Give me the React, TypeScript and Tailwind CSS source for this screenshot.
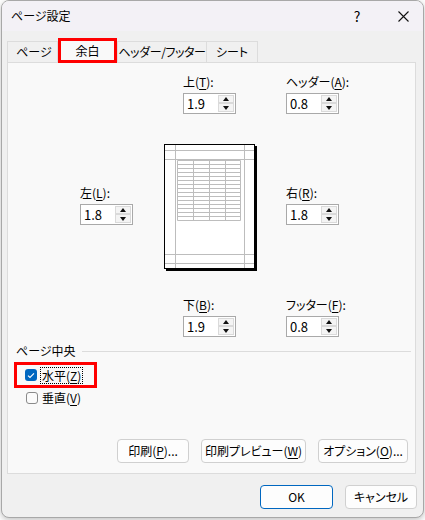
import React from 'react';

function Key({ k }: { k: string }) {
  return <span className="underline underline-offset-[2px]">{k}</span>;
}

function SpinField({ label, k, value }: { label: string; k: string; value: string }) {
  return (
    <div className="flex w-[53px] flex-col">
      <div className="mb-[3px] h-[16px] whitespace-nowrap text-[12px] leading-[16px]">
        {label}(<Key k={k} />):
      </div>
      <div className="flex h-[21px] w-[53px] border border-[#a9a9a9] bg-white">
        <div className="flex-1 pl-[3px] text-[13px] leading-[19px]">{value}</div>
        <div className="my-[1px] mr-[1px] flex w-[16px] flex-col">
          <div className="flex h-[9px] items-center justify-center border border-[#dadada] bg-[#f4f4f4]">
            <svg width="6" height="4" viewBox="0 0 6 4"><path d="M3 0L6 4H0z" fill="#111" /></svg>
          </div>
          <div className="flex h-[10px] items-center justify-center border border-[#dadada] bg-[#f4f4f4]">
            <svg width="6" height="4" viewBox="0 0 6 4"><path d="M0 0H6L3 4z" fill="#111" /></svg>
          </div>
        </div>
      </div>
    </div>
  );
}

function PagePreview() {
  const rows = Array.from({ length: 16 }, (_, i) => 16.5 + i * 4);
  const cols = [13.5, 29.5, 45.5, 61.5, 76.5];
  return (
    <svg width="93" height="127" viewBox="0 0 93 127" className="shrink-0">
      <rect x="2" y="2" width="91" height="125" fill="#000" />
      <rect x="0.5" y="0.5" width="90" height="124" fill="#fff" stroke="#000" />
      <g stroke="#bdbdbd" strokeWidth="1">
        <line x1="11.5" y1="1" x2="11.5" y2="124" />
        <line x1="80.5" y1="1" x2="80.5" y2="124" />
        <line x1="1" y1="6.5" x2="90" y2="6.5" />
        <line x1="1" y1="15.5" x2="90" y2="15.5" />
        <line x1="1" y1="110.5" x2="90" y2="110.5" />
        <line x1="1" y1="119.5" x2="90" y2="119.5" />
        {rows.map(y => (
          <line key={y} x1="13.5" y1={y} x2="76.5" y2={y} />
        ))}
        {cols.map(x => (
          <line key={x} x1={x} y1="16.5" x2={x} y2="76.5" />
        ))}
      </g>
    </svg>
  );
}

function Btn({ children, w, primary }: { children: React.ReactNode; w: string; primary?: boolean }) {
  return (
    <button
      className={`flex h-[24px] items-center justify-center rounded-[4px] bg-[#fdfdfd] text-[12px] ${w} ${primary ? 'border border-[#0067c0]' : 'border border-[#d0d0d0]'}`}
    >
      {children}
    </button>
  );
}

export default function App() {
  return (
    <div className="h-[520px] w-[425px] bg-white font-['Noto_Sans_CJK_JP','Noto_Sans',sans-serif] text-black [font-feature-settings:'palt']">
      <div className="ml-[1px] flex h-[518px] w-[423px] flex-col overflow-hidden rounded-[8px] border border-[#a8a8a8] bg-[#f0f0f0] shadow-[0_2px_6px_rgba(0,0,0,0.25)]">
        {/* title bar */}
        <div className="flex h-[30px] shrink-0 items-center bg-[#f3f1f6] pl-[9px]">
          <span className="text-[12px]">ページ設定</span>
          <div className="ml-auto mr-[6px] flex w-[40px] justify-center text-[14px]">?</div>
          <div className="flex w-[40px] justify-center">
            <svg width="11" height="11" viewBox="0 0 11 11">
              <path d="M0.5 0.5L10.5 10.5M10.5 0.5L0.5 10.5" stroke="#111" strokeWidth="1.1" />
            </svg>
          </div>
        </div>

        <div className="flex flex-col pl-[5px] pr-[7px] pt-[7px]">
          {/* tabs */}
          <div className="relative z-10 -mb-px flex h-[25px] items-end text-[12px]">
            <div className="mb-[1px] flex h-[21px] w-[51px] items-center justify-center border border-b-0 border-[#dcdcdc] bg-[#f0f0f0] pl-[3px]">ページ</div>
            <div className="flex h-[25px] w-[59px] items-center justify-center border-[3px] border-[#ff0000] bg-[#f9f9f9]">余白</div>
            <div className="mb-[1px] flex h-[21px] w-[90px] items-center justify-center border border-b-0 border-[#dcdcdc] bg-[#f0f0f0] tracking-[-0.4px]">ヘッダー/フッター</div>
            <div className="mb-[1px] flex h-[21px] w-[51px] items-center justify-center border border-b-0 border-l-0 border-[#dcdcdc] bg-[#f0f0f0]">シート</div>
          </div>

          {/* panel */}
          <div className="flex h-[412px] flex-col border border-[#dcdcdc] bg-[#f9f9f9] text-[12px]">
            <div className="flex gap-[50px] pl-[175px] pt-[11px]">
              <SpinField label="上" k="T" value="1.9" />
              <SpinField label="ヘッダー" k="A" value="0.8" />
            </div>

            <div className="mt-[30px] flex items-start pl-[72px]">
              <div className="mt-[41px]">
                <SpinField label="左" k="L" value="1.8" />
              </div>
              <div className="ml-[31px]">
                <PagePreview />
              </div>
              <div className="ml-[29px] mt-[41px]">
                <SpinField label="右" k="R" value="1.8" />
              </div>
            </div>

            <div className="mt-[26px] flex gap-[50px] pl-[175px]">
              <SpinField label="下" k="B" value="1.9" />
              <SpinField label="フッター" k="F" value="0.8" />
            </div>

            <div className="mt-[6px] flex h-[16px] items-center pl-[8px] pr-[4px]">
              <span className="leading-[16px]">ページ中央</span>
              <div className="ml-[6px] h-px flex-1 bg-[#dcdcdc]" />
            </div>

            <div className="relative mt-[6px] flex h-[20px] items-center pl-[17px]">
              <div className="absolute left-[6px] top-[-3px] h-[26px] w-[83px] border-[3px] border-[#ff0000]" />
              <div className="flex h-[12px] w-[12px] items-center justify-center rounded-[3px] bg-[#0067c0]">
                <svg width="8" height="7" viewBox="0 0 8 7">
                  <path d="M1 3.6L3 5.5L7 1.3" stroke="#fff" strokeWidth="1.1" fill="none" />
                </svg>
              </div>
              <span className="ml-[3px] border border-dotted border-black px-[1px] leading-[15px]">
                水平(<Key k="Z" />)
              </span>
            </div>

            <div className="mt-[3px] flex h-[20px] items-center pl-[18px]">
              <div className="h-[12px] w-[12px] rounded-[3px] border border-[#8a8a8a] bg-[#fbfbfb]" />
              <span className="ml-[4px]">
                垂直(<Key k="V" />)
              </span>
            </div>

            <div className="mt-auto flex justify-end gap-[12px] pb-[10px] pr-[7px]">
              <Btn w="w-[72px]">印刷(<Key k="P" />)...</Btn>
              <Btn w="w-[105px]">印刷プレビュー(<Key k="W" />)</Btn>
              <Btn w="w-[90px]">オプション(<Key k="O" />)...</Btn>
            </div>
          </div>

          {/* footer */}
          <div className="-mr-px mt-[11px] flex justify-end gap-[12px]">
            <Btn w="w-[73px]" primary>OK</Btn>
            <Btn w="w-[72px]">キャンセル</Btn>
          </div>
        </div>
      </div>
    </div>
  );
}
